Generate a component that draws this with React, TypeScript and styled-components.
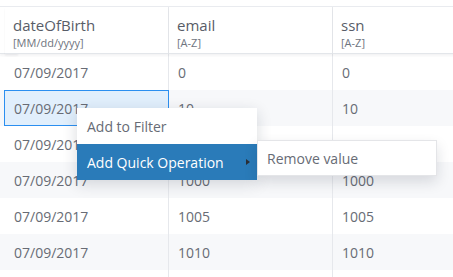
import React from "react";
import styled, { createGlobalStyle } from "styled-components";

const Global = createGlobalStyle`
  html, body { margin: 0; padding: 0; background: #ffffff; }
  body { font-family: "Open Sans", "Liberation Sans", sans-serif; }
  * { box-sizing: border-box; }
`;

const Page = styled.div`
  position: relative;
  width: 453px;
  height: 277px;
  overflow: hidden;
  padding-top: 6px;
  background: #ffffff;
`;

const Grid = styled.div`
  display: grid;
  grid-template-columns: 5px 164px 164px 164px;
  border-top: 1px solid #e9ebef;
  width: max-content;
`;

const HeaderCell = styled.div`
  height: 47px;
  padding: 8px 9px 0 8px;
  border-right: 1px solid #e6e8ec;
  border-bottom: 1px solid #e3e6ea;
  box-shadow: 0 2px 2px rgba(30, 40, 60, 0.05);
  display: flex;
  flex-direction: column;
  position: relative;
  z-index: 1;
  background: #fff;
`;

const Title = styled.span`
  font-size: 15px;
  line-height: 20px;
  font-weight: 500;
  color: #585d68;
  white-space: nowrap;
`;

const Sub = styled.span`
  font-size: 11px;
  line-height: 15px;
  color: #6f7480;
  white-space: nowrap;
`;

const Cell = styled.div<{ $odd: boolean; $selected?: boolean }>`
  height: 36px;
  padding: 0 9px;
  display: flex;
  align-items: center;
  font-size: 14px;
  color: #686c75;
  white-space: nowrap;
  border-right: 1px solid #e6e8ec;
  background: ${(p) => (p.$selected ? "#e1effc" : p.$odd ? "#f7f8fa" : "#ffffff")};
  position: relative;
  ${(p) =>
    p.$selected &&
    `
    &::after {
      content: "";
      position: absolute;
      top: 0; bottom: 0; left: -1px; right: -1px;
      border: 1px solid #2b8ff0;
      pointer-events: none;
    }
  `}
`;

const Menu = styled.div<{ $left: number; $top: number }>`
  position: absolute;
  left: ${(p) => p.$left}px;
  top: ${(p) => p.$top}px;
  width: 180px;
  background: #ffffff;
  box-shadow: 0 4px 14px rgba(20, 30, 50, 0.16);
  z-index: 5;
`;

const SubMenu = styled(Menu)`
  border: 1px solid #e4e5e8;
  box-shadow: 0 6px 14px rgba(20, 30, 50, 0.14);
`;

const Item = styled.div<{ $active?: boolean }>`
  height: 36px;
  padding: 0 10px;
  display: flex;
  align-items: center;
  justify-content: space-between;
  font-size: 14px;
  color: ${(p) => (p.$active ? "#ffffff" : "#676b75")};
  background: ${(p) => (p.$active ? "#2a7bb9" : "transparent")};
  white-space: nowrap;
`;

const SubItem = styled(Item)`
  height: 34px;
  padding: 0 9px;
`;

const Caret = styled.span`
  width: 0;
  height: 0;
  border-top: 3px solid transparent;
  border-bottom: 3px solid transparent;
  border-left: 4px solid #2b2f36;
  margin-right: -3px;
`;

const columns = [
  { title: "", sub: "" },
  { title: "dateOfBirth", sub: "[MM/dd/yyyy]" },
  { title: "email", sub: "[A-Z]" },
  { title: "ssn", sub: "[A-Z]" },
];

const rows = [
  ["", "07/09/2017", "0", "0"],
  ["", "07/09/2017", "10", "10"],
  ["", "07/09/2017", "100", "100"],
  ["", "07/09/2017", "1000", "1000"],
  ["", "07/09/2017", "1005", "1005"],
  ["", "07/09/2017", "1010", "1010"],
  ["", "", "", ""],
];

export default function App() {
  return (
    <>
      <Global />
      <Page>
        <Grid>
          {columns.map((c, i) => (
            <HeaderCell key={"h" + i}>
              <Title>{c.title}</Title>
              <Sub>{c.sub}</Sub>
            </HeaderCell>
          ))}
          {rows.map((r, ri) =>
            r.map((v, ci) => (
              <Cell key={ri + "-" + ci} $odd={ri % 2 === 1} $selected={ri === 1 && ci === 1}>
                {v}
              </Cell>
            ))
          )}
        </Grid>
        <Menu $left={77} $top={108}>
          <Item>Add to Filter</Item>
          <Item $active>
            Add Quick Operation
            <Caret />
          </Item>
        </Menu>
        <SubMenu $left={257} $top={140}>
          <SubItem>Remove value</SubItem>
        </SubMenu>
      </Page>
    </>
  );
}
